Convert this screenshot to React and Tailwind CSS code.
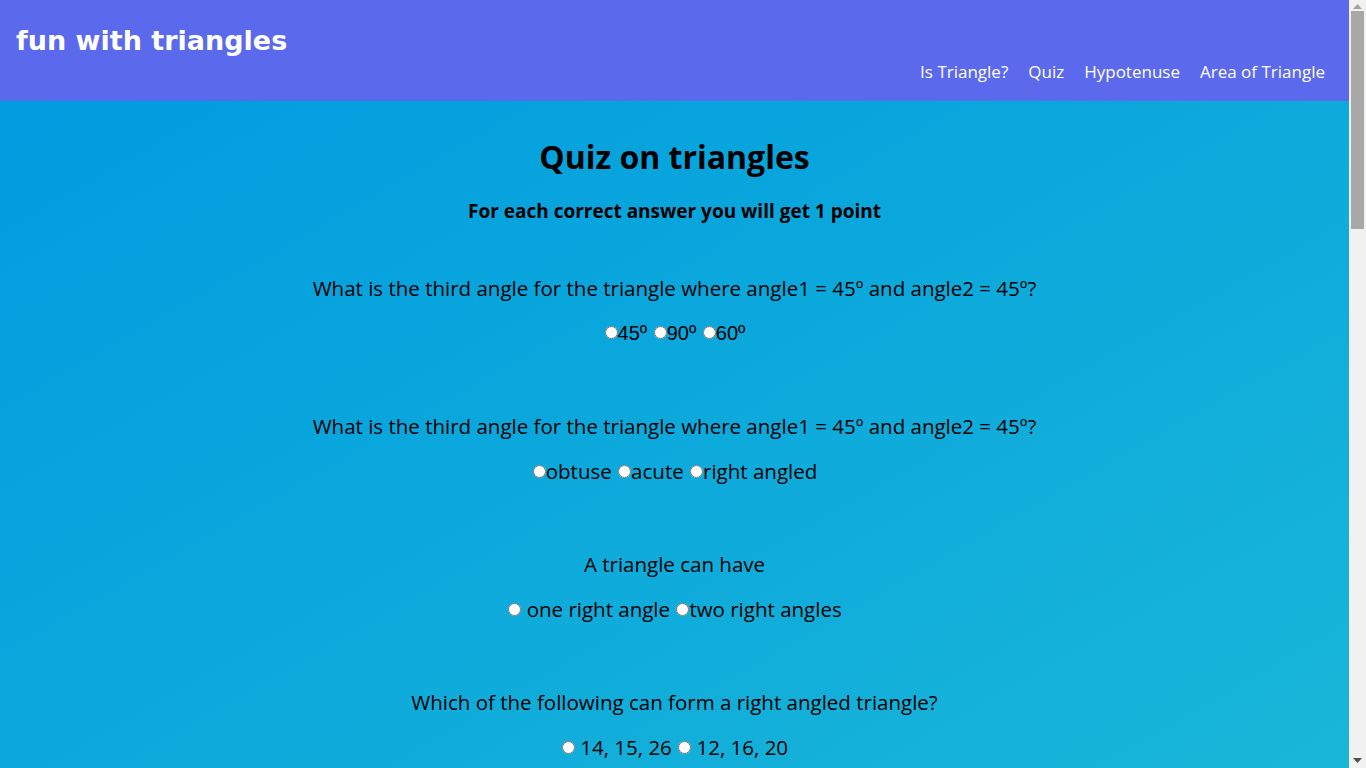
import { useState } from 'react';

const navLinks = ['Is Triangle?', 'Quiz', 'Hypotenuse', 'Area of Triangle'];

const questions = [
  {
    id: 'q1',
    text: 'What is the third angle for the triangle where angle1 = 45º and angle2 = 45º?',
    options: ['45º', '90º', '60º'],
    arial: true,
  },
  {
    id: 'q2',
    text: 'What is the third angle for the triangle where angle1 = 45º and angle2 = 45º?',
    options: ['obtuse', 'acute', 'right angled'],
  },
  {
    id: 'q3',
    text: 'A triangle can have',
    options: [' one right angle', 'two right angles'],
  },
  {
    id: 'q4',
    text: 'Which of the following can form a right angled triangle?',
    options: [' 14, 15, 26', ' 12, 16, 20'],
  },
  {
    id: 'q5',
    text: 'Which of the following triangles are always similar?',
    options: [' Equilateral triangle', ' Isosceles triangle'],
  },
  {
    id: 'q6',
    text: 'If the largest angle in a triangle is 70º, what is the least possible value of the smallest angle?',
    options: [' 69º', ' 10º', ' 40º', ' 1º'],
  },
  {
    id: 'q7',
    text: 'The perimeter of an equilateral triangle is 15cm. What is the length of one side?',
    options: [' 5 cm', ' 3 cm', ' 45 cm'],
  },
  {
    id: 'q8',
    text: 'In a triangle, one angle is 90º. Then',
    options: [' The other two angles are 45º each', ' The other two angles are complementary'],
  },
  {
    id: 'q9',
    text: 'An exterior angle of a triangle is equal to the sum of its two interior opposite angles',
    options: [' true', ' false'],
  },
  {
    id: 'q10',
    text: 'A triangle with one angle greater than 90º is called',
    options: [' obtuse', ' acute', ' right angled'],
  },
  {
    id: 'q11',
    text: 'What is the sum of all three angles of a triangle?',
    options: [' 90º', ' 180º', ' 360º'],
  },
  {
    id: 'q12',
    text: 'If a triangle has sides 3, 4 and 5, the triangle is',
    options: [' scalene', ' isosceles', ' equilateral'],
  },
  {
    id: 'q13',
    text: 'How many acute angles can a triangle have at most?',
    options: [' one', ' two', ' three'],
  },
  {
    id: 'q14',
    text: 'The longest side of a right angled triangle is called',
    options: [' hypotenuse', ' base', ' height'],
  },
  {
    id: 'q15',
    text: 'Can a triangle have all its sides equal and angles equal to 60º?',
    options: [' yes', ' no'],
  },
];

function Question({ question, value, onChange }) {
  return (
    <div className="pt-[35px] pb-[30px]">
      <p className="text-[20.5px] leading-[28px]">{question.text}</p>
      <div
        className={`mt-[17px] leading-[28px] ${
          question.arial ? 'font-["Liberation_Sans",Arial,sans-serif] text-[20px]' : 'text-[20.5px]'
        }`}
      >
        {question.options.map((option, index) => (
          <span key={option}>
            <label>
              <input
                type="radio"
                name={question.id}
                value={option}
                checked={value === option}
                onChange={() => onChange(question.id, option)}
                className="m-0 ml-[1px] h-[13px] w-[13px] align-[1px]"
              />
              {option}
            </label>
            {index < question.options.length - 1 && ' '}
          </span>
        ))}
      </div>
    </div>
  );
}

// the browser's own scrollbar is hidden in the capture, so draw the classic one
function ScrollRail() {
  return (
    <div className="flex h-screen w-[17px] shrink-0 flex-col items-center bg-[#f1f1f1]">
      <div className="flex h-[11px] w-full items-center justify-center pt-[2px]">
        <svg width="9" height="5" viewBox="0 0 9 5">
          <path d="M0 5 L4.5 0 L9 5 Z" fill="#a3a3a3" />
        </svg>
      </div>
      <div className="h-[218px] w-[13px] bg-[#a8a8a8]" />
      <div className="flex-1" />
      <div className="flex h-[14px] w-full items-center justify-center pb-[2px]">
        <svg width="9" height="5" viewBox="0 0 9 5">
          <path d="M0 0 L9 0 L4.5 5 Z" fill="#505050" />
        </svg>
      </div>
    </div>
  );
}

function App() {
  const [answers, setAnswers] = useState({});

  const handleChange = (id, option) => setAnswers((prev) => ({ ...prev, [id]: option }));

  return (
    <div className="flex h-screen overflow-hidden">
      <div className="min-w-0 flex-1 overflow-y-scroll bg-linear-to-br from-[#009ae0] to-[#19b6d8] font-['Open_Sans',sans-serif] text-black [scrollbar-width:none]">
        <header className="flex h-[101px] items-start justify-between bg-[#5b69ed] pl-[16px] pr-[24px] text-white">
          <h1 className="mt-[21px] font-['DejaVu_Sans',sans-serif] text-[27px] font-bold leading-[40px]">
            fun with triangles
          </h1>
          <nav className="mt-[60px] flex gap-[20px] text-[17px] leading-[24px]">
            {navLinks.map((link) => (
              <a key={link} href="#" className="text-white">
                {link}
              </a>
            ))}
          </nav>
        </header>

        <main className="pb-16 text-center">
          <h2 className="pt-[34px] text-[32px] font-bold leading-[44px]">Quiz on triangles</h2>
          <p className="mt-[19px] text-[19px] font-bold leading-[26px]">For each correct answer you will get 1 point</p>

          <form className="mt-[15px]" onSubmit={(event) => event.preventDefault()}>
            {questions.map((question) => (
              <Question
                key={question.id}
                question={question}
                value={answers[question.id]}
                onChange={handleChange}
              />
            ))}
            <button
              type="submit"
              className="mt-4 rounded-md bg-[#5b69ed] px-6 py-2 text-[18px] font-semibold text-white"
            >
              Submit Answers
            </button>
          </form>
        </main>
      </div>
      <ScrollRail />
    </div>
  );
}

export default App;
